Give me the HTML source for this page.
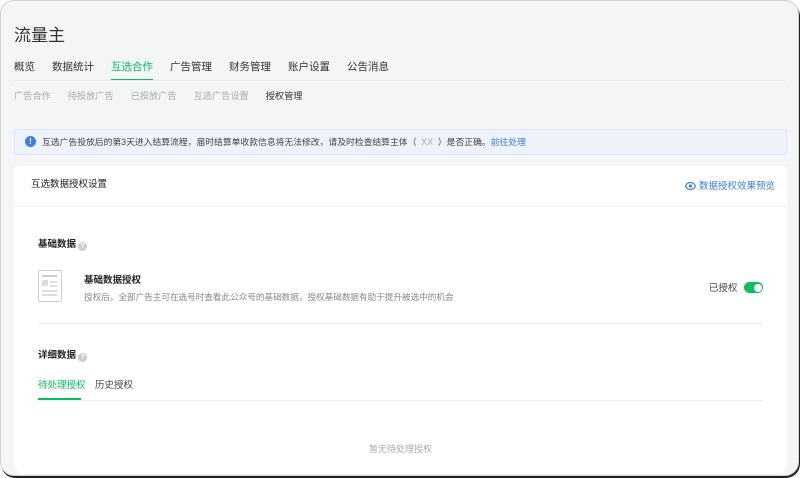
<!DOCTYPE html>
<html><head><meta charset="utf-8"><style>
*{margin:0;padding:0;box-sizing:border-box}
html,body{width:800px;height:478px;overflow:hidden;background:#fff}
body{font-family:"Liberation Sans","Noto Sans CJK SC",sans-serif;position:relative}
.frame{position:absolute;left:0;top:0;width:799px;height:476px;border-radius:14px;background:#f3f5f7;border:1px solid #cfd2d6;box-shadow:1px 2px 0 #222;overflow:hidden}
.title{position:absolute;left:13px;top:20px;font-size:17px;color:#333}
.nav{position:absolute;left:13px;top:58px;font-size:10.5px;color:#333;display:flex}
.nav span{margin-right:17px;position:relative;white-space:nowrap}
.nav .on{color:#07c160}
.nav .on:after{content:"";position:absolute;left:0;right:0;top:20px;height:2px;background:#07c160}
.line1{position:absolute;left:13px;right:13px;top:79px;height:1px;background:#e5e7ea}
.sub{position:absolute;left:13px;top:87px;font-size:9.2px;color:#aaa;display:flex}
.sub span{margin-right:17px}
.sub .on{color:#333}
.alert{position:absolute;left:13px;top:128px;width:773px;height:26px;background:#eef2fa;border:1px solid #dfe6f5;border-radius:3px;font-size:8.8px;color:#444;line-height:24px;padding-left:27px}
.alert .ic{position:absolute;left:10px;top:6px;width:11px;height:11px;border-radius:50%;background:#3d7fe3;color:#fff;font-size:8px;line-height:11px;text-align:center;font-weight:bold}
.alert a{color:#3d7fe3}
.card{position:absolute;left:13px;top:165px;width:773px;height:308px;background:#fff;border-radius:4px 4px 10px 10px}
.ch{height:41px;border-bottom:1px solid #eee;font-size:9.5px;color:#222;line-height:38px;padding-left:17px}
.prev{position:absolute;right:12px;top:12px;font-size:9.5px;color:#3d7fe3}
.q{display:inline-block;width:9px;height:9px;border-radius:50%;background:#ccc;color:#fff;font-size:7px;line-height:9px;text-align:center;vertical-align:-1px;margin-left:2px}
.h{position:absolute;left:24px;font-size:9.5px;color:#222;font-weight:bold}
.doc{position:absolute;left:24px;top:104px;width:24px;height:32px;border:1.5px solid #ccc;border-radius:2px}
.doc i{position:absolute;background:#ddd;height:2px}
.sep{position:absolute;left:24px;right:24px;height:1px;background:#eee}
</style></head><body>
<div class="frame">
<div class="title">流量主</div>
<div class="nav"><span>概览</span><span>数据统计</span><span class="on">互选合作</span><span>广告管理</span><span>财务管理</span><span>账户设置</span><span>公告消息</span></div>
<div class="line1"></div>
<div class="sub"><span>广告合作</span><span>待投放广告</span><span>已投放广告</span><span>互选广告设置</span><span class="on">授权管理</span></div>
<div class="alert"><span class="ic">!</span>互选广告投放后的第3天进入结算流程，届时结算单收款信息将无法修改，请及时检查结算主体（ <span style="color:#aaa">&nbsp;XX&nbsp;</span> ）是否正确。<a>前往处理</a></div>
<div class="card">
<div class="ch">互选数据授权设置</div>
<div class="prev"><svg width="11" height="8" viewBox="0 0 11 8" style="vertical-align:-1px;margin-right:3px"><path d="M0.5 4C2 1 4 0.5 5.5 0.5S9 1 10.5 4C9 7 7 7.5 5.5 7.5S2 7 0.5 4Z" fill="none" stroke="#3d7fe3" stroke-width="1.2"/><circle cx="5.5" cy="4" r="1.6" fill="#3d7fe3"/></svg>数据授权效果预览</div>
<div class="h" style="top:70px">基础数据<span class="q">?</span></div>
<div class="doc"><i style="left:3px;top:4px;width:15px;background:#ccc"></i><i style="left:3px;top:9px;width:6px;height:6px"></i><i style="left:11px;top:10px;width:7px"></i><i style="left:11px;top:14px;width:7px"></i><i style="left:3px;top:19px;width:15px"></i><i style="left:3px;top:23px;width:15px"></i></div>
<div class="h" style="top:106px;left:70px">基础数据授权</div>
<div style="position:absolute;left:70px;top:125px;font-size:8.6px;color:#888">授权后，全部广告主可在选号时查看此公众号的基础数据，授权基础数据有助于提升被选中的机会</div>
<div style="position:absolute;right:24px;top:114px;font-size:9.5px;color:#444">已授权 <span style="display:inline-block;width:19px;height:11px;border-radius:6px;background:#07c160;vertical-align:-2px;margin-left:4px;position:relative"><span style="position:absolute;right:1.5px;top:1.5px;width:8px;height:8px;border-radius:50%;background:#fff"></span></span></div>
<div class="sep" style="top:157px"></div>
<div class="h" style="top:181px">详细数据<span class="q">?</span></div>
<div style="position:absolute;left:24px;top:211px;font-size:9.5px;color:#07c160">待处理授权</div>
<div style="position:absolute;left:81px;top:211px;font-size:9.5px;color:#444">历史授权</div>
<div style="position:absolute;left:24px;top:232px;width:43px;height:2px;background:#07c160"></div>
<div class="sep" style="top:234px"></div>
<div style="position:absolute;left:0;right:0;top:276px;text-align:center;font-size:9px;color:#aaa">暂无待处理授权</div>
</div>
</div>
</body></html>
